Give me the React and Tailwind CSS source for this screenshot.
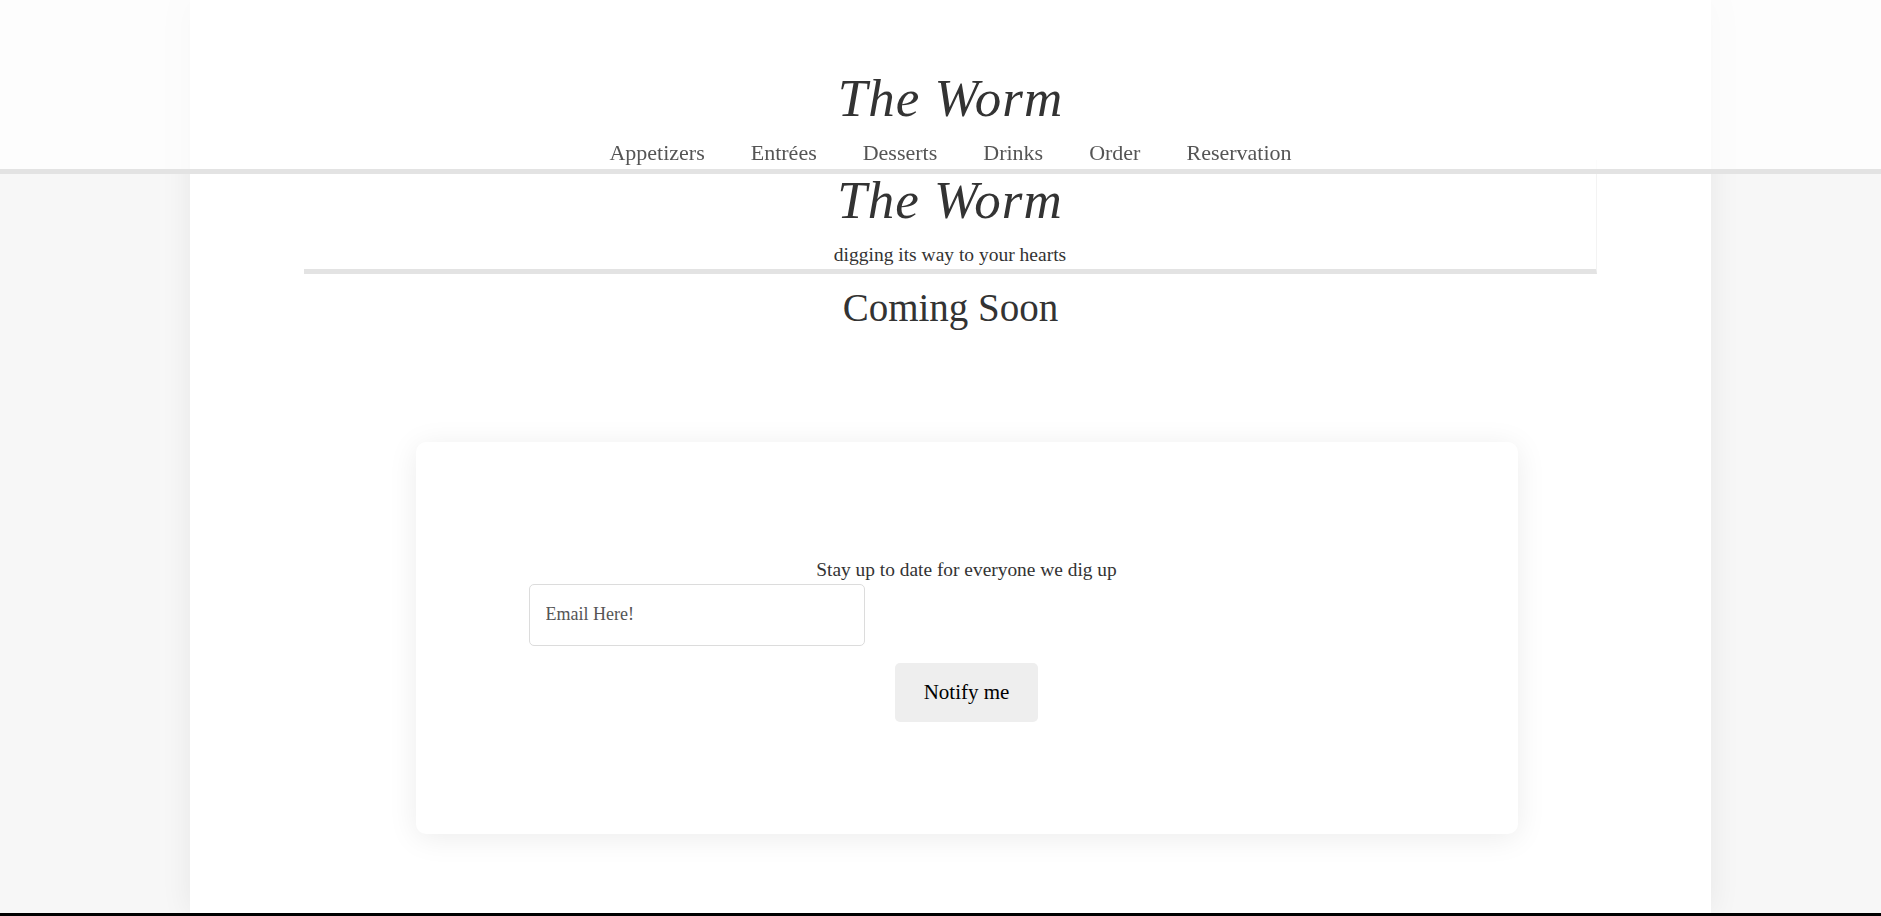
const NAV = ["Appetizers", "Entrées", "Desserts", "Drinks", "Order", "Reservation"];

export default function App() {
  return (
    <div className="min-h-screen bg-[#f7f7f7] font-['Liberation_Serif',serif] text-[#333]">
      {/* fixed top bar */}
      <header className="fixed inset-x-0 top-0 z-10 h-[174px] border-b-[5px] border-[#e3e3e3] bg-white/70 pl-[20px]">
        <div className="flex flex-col items-center pt-[72px]">
          <h1 className="text-[53px] leading-none italic tracking-[1px] text-[#333]">The Worm</h1>
          <nav className="mt-[17px] flex gap-[46px] text-[22px] leading-none text-[#555]">
            {NAV.map((item) => (
              <a key={item} href="#" className="hover:text-black">
                {item}
              </a>
            ))}
          </nav>
        </div>
      </header>

      <div className="pl-[20px]">
        <main className="mx-auto flex h-[913px] w-[1521px] flex-col items-center bg-white shadow-[0_0_30px_rgba(0,0,0,0.07)]">
          {/* hero */}
          <section className="mt-[160px] flex w-[85%] flex-col items-center border-r border-b-[5px] border-r-[#f3f3f3] border-b-[#e3e3e3] pt-[14px] pb-[4px]">
            <h2 className="text-[53px] leading-none italic tracking-[1px]">The Worm</h2>
            <p className="mt-[18px] text-[19.5px] leading-none">digging its way to your hearts</p>
          </section>

          <h3 className="mt-[14px] text-[39px] leading-none">Coming Soon</h3>

          {/* signup card */}
          <div className="mt-[115px] ml-[32px] flex h-[392px] w-[1102px] flex-col rounded-[10px] bg-white px-[113px] pt-[118px] shadow-[0_4px_30px_rgba(0,0,0,0.08)]">
            <p className="text-center text-[19.4px] leading-none">Stay up to date for everyone we dig up</p>
            <input
              type="text"
              placeholder="Email Here!"
              className="mt-[5px] h-[62px] w-[336px] rounded-[5px] border border-[#dcdcdc] px-[16px] text-[18px] text-[#333] placeholder:text-[#555] outline-none"
            />
            <button className="mx-auto mt-[17px] h-[59px] w-[143px] rounded-[5px] bg-[#eeeeee] text-[21px] text-black">
              Notify me
            </button>
          </div>
        </main>
      </div>
      <footer className="h-[3px] bg-black" />
    </div>
  );
}
